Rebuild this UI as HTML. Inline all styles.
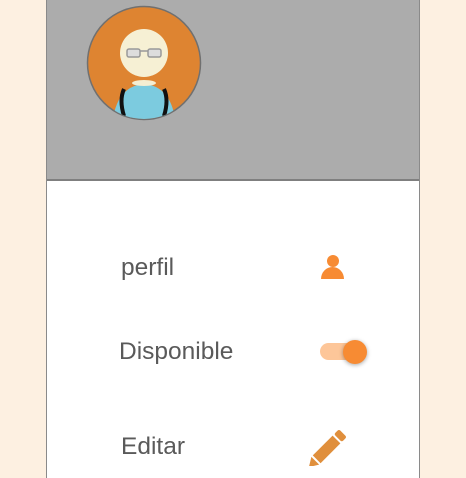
<!DOCTYPE html>
<html><head><meta charset="utf-8"><style>
html,body{margin:0;padding:0;width:466px;height:466px;overflow:hidden;background:#fdf0e1;}
.panel{position:absolute;left:46px;top:-2px;width:372px;height:480px;background:#fff;border-left:1px solid #8a8a8a;border-right:1px solid #8a8a8a;}
.head{position:absolute;left:0;top:0;width:372px;height:181px;background:#acacac;border-bottom:2px solid #7f7f7f;}
.t{position:absolute;font-family:"Liberation Sans",sans-serif;font-size:24.5px;color:#5a5a5a;}
svg{position:absolute;}
</style></head><body>
<div class="panel"><div class="head"></div></div>
<svg width="466" height="466" style="left:0;top:0">
<defs><clipPath id="c"><circle cx="144" cy="63" r="56"/></clipPath></defs>
<circle cx="144" cy="63" r="56.5" fill="#de8431" stroke="#707070" stroke-width="1.5"/>
<g clip-path="url(#c)">
<path d="M112 125 Q116 86 144 84 Q172 86 176 125 Z" fill="#7ccbdf"/>
<path d="M124 89 Q119 100 124 116" stroke="#111" stroke-width="4" fill="none"/>
<path d="M164 89 Q169 100 164 116" stroke="#111" stroke-width="4" fill="none"/>
</g>
<ellipse cx="144" cy="83" rx="12" ry="3" fill="#f5eed2"/>
<circle cx="144" cy="53" r="24" fill="#f6f0d4"/>
<rect x="127" y="49" width="13" height="8" rx="2" fill="#ddd" stroke="#999" stroke-width="1.5"/>
<rect x="148" y="49" width="13" height="8" rx="2" fill="#ddd" stroke="#999" stroke-width="1.5"/>
<line x1="140" y1="51" x2="148" y2="51" stroke="#999" stroke-width="1.5"/>
<circle cx="333" cy="261" r="6" fill="#f78b33"/>
<path d="M321 279 A11.5 12 0 0 1 344 279 Z" fill="#f78b33"/>
<rect x="320" y="343" width="38" height="17" rx="8.5" fill="#fdc699"/>
<circle cx="355" cy="352" r="12" fill="#f78b33" style="filter:drop-shadow(0 1px 2px rgba(0,0,0,.35))"/>
<g transform="translate(328,448) rotate(-45)">
<rect x="-16" y="-5.5" width="28" height="11" fill="#e08f3c"/>
<rect x="14" y="-5.5" width="7" height="11" rx="2" fill="#e08f3c"/>
<path d="M-18 -5.5 L-27 0 L-18 5.5 Z" fill="#e08f3c"/>
</g>
</svg>
<div class="t" style="left:121px;top:254px">perfil</div>
<div class="t" style="left:119px;top:338px">Disponible</div>
<div class="t" style="left:121px;top:433px">Editar</div>
</body></html>
